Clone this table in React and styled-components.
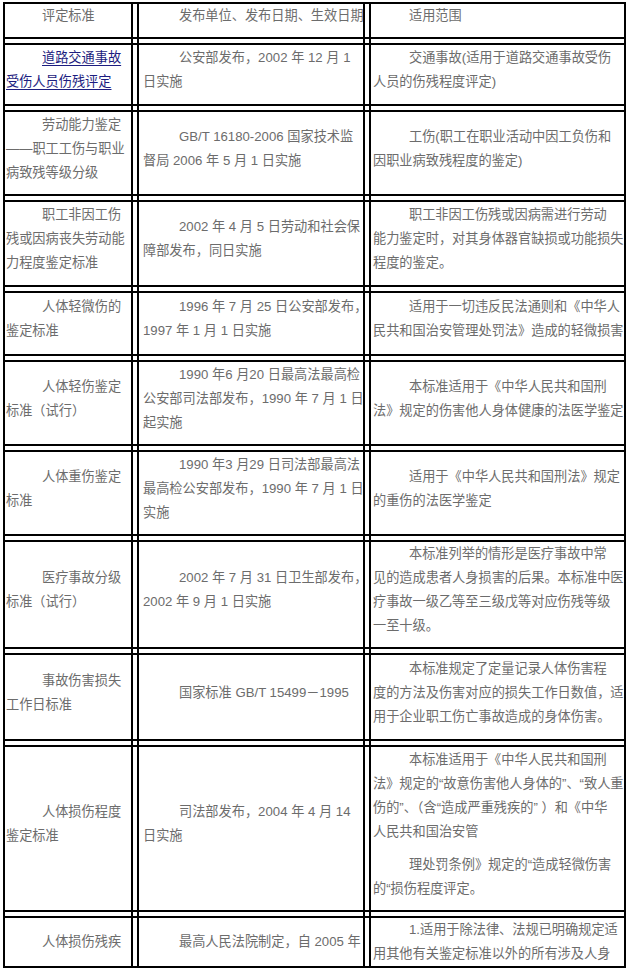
import React from 'react'
import styled, { createGlobalStyle } from 'styled-components'

const GlobalStyle = createGlobalStyle`
  html, body {
    margin: 0;
    padding: 0;
    background: #fff;
  }
  body {
    font-family: "Liberation Sans", "Noto Sans CJK SC", sans-serif;
  }
`

const rows = [
  { h: 37, cells: [[['评定标准']], [['发布单位、发布日期、生效日期']], [['适用范围']]] },
  {
    h: 63,
    link: 0,
    cells: [
      [['道路交通事故', '受伤人员伤残评定 ']],
      [['公安部发布，2002 年 12 月 1', '日实施']],
      [['交通事故(适用于道路交通事故受伤', '人员的伤残程度评定)']],
    ],
  },
  {
    h: 86,
    cells: [
      [['劳动能力鉴定', '——职工工伤与职业', '病致残等级分级']],
      [['GB/T 16180-2006 国家技术监', '督局 2006 年 5 月 1 日实施']],
      [['工伤(职工在职业活动中因工负伤和', '因职业病致残程度的鉴定)']],
    ],
  },
  {
    h: 87,
    cells: [
      [['职工非因工伤', '残或因病丧失劳动能', '力程度鉴定标准']],
      [['2002 年 4 月 5 日劳动和社会保', '障部发布，同日实施']],
      [['职工非因工伤残或因病需进行劳动', '能力鉴定时，对其身体器官缺损或功能损失', '程度的鉴定。']],
    ],
  },
  {
    h: 65,
    cells: [
      [['人体轻微伤的', '鉴定标准']],
      [['1996 年 7 月 25 日公安部发布，', '1997 年 1 月 1 日实施']],
      [['适用于一切违反民法通则和《中华人', '民共和国治安管理处罚法》造成的轻微损害']],
    ],
  },
  {
    h: 86,
    cells: [
      [['人体轻伤鉴定', '标准（试行）']],
      [['1990 年6 月20 日最高法最高检', '公安部司法部发布，1990 年 7 月 1 日', '起实施']],
      [['本标准适用于《中华人民共和国刑', '法》规定的伤害他人身体健康的法医学鉴定']],
    ],
  },
  {
    h: 86,
    cells: [
      [['人体重伤鉴定', '标准']],
      [['1990 年3 月29 日司法部最高法', '最高检公安部发布，1990 年 7 月 1 日', '实施']],
      [['适用于《中华人民共和国刑法》规定', '的重伤的法医学鉴定']],
    ],
  },
  {
    h: 109,
    cells: [
      [['医疗事故分级', '标准（试行）']],
      [['2002 年 7 月 31 日卫生部发布，', '2002 年 9 月 1 日实施']],
      [[
        '本标准列举的情形是医疗事故中常',
        '见的造成患者人身损害的后果。本标准中医',
        '疗事故一级乙等至三级戊等对应伤残等级',
        '一至十级。',
      ]],
    ],
  },
  {
    h: 88,
    cells: [
      [['事故伤害损失', '工作日标准']],
      [['国家标准  GB/T 15499－1995']],
      [[
        '本标准规定了定量记录人体伤害程',
        '度的方法及伤害对应的损失工作日数值，适',
        '用于企业职工伤亡事故造成的身体伤害。',
      ]],
    ],
  },
  {
    h: 167,
    cells: [
      [['人体损伤程度', '鉴定标准']],
      [['司法部发布，2004 年 4 月 14', '日实施']],
      [
        [
          '本标准适用于《中华人民共和国刑',
          '法》规定的“故意伤害他人身体的”、“致人重',
          '伤的”、（含“造成严重残疾的” ）和《中华',
          '人民共和国治安管',
        ],
        ['理处罚条例》规定的“造成轻微伤害', '的“损伤程度评定。'],
      ],
    ],
  },
  {
    h: 52,
    tight: true,
    cells: [
      [['人体损伤残疾']],
      [['最高人民法院制定，自 2005 年']],
      [['1.适用于除法律、法规已明确规定适', '用其他有关鉴定标准以外的所有涉及人身']],
    ],
  },
]

// border-box widths of the three columns
const colWidths = [130, 228, 257]

const App = () => {
  return (
    <>
      <GlobalStyle />
      <Table>
        <colgroup>
          {colWidths.map((w, i) => (
            <Col key={i} $w={w} />
          ))}
        </colgroup>
        <tbody>
          {rows.map((row, r) => (
            <Row key={r} $h={row.h}>
              {row.cells.map((paras, c) => (
                <Cell key={c} $col={c} $lastRow={r === rows.length - 1}>
                  {paras.map((lines, p) => (
                    <Para key={p} $tight={row.tight}>
                      {row.link === c ? (
                        <Link href="#">{renderLines(lines)}</Link>
                      ) : (
                        renderLines(lines)
                      )}
                    </Para>
                  ))}
                </Cell>
              ))}
            </Row>
          ))}
        </tbody>
      </Table>
    </>
  )
}

const renderLines = (lines) =>
  lines.map((line, i) => (
    <React.Fragment key={i}>
      {i > 0 && <br />}
      {line}
    </React.Fragment>
  ))

export default App

const Table = styled.table`
  border-collapse: separate;
  border-spacing: 4px;
  table-layout: fixed;
  width: 630px;
  margin: -2px 0 0 -1px;
`

const Col = styled.col`
  width: ${(p) => p.$w}px;
`

const Row = styled.tr`
  height: ${(p) => p.$h}px;
`

// each cell carries its own box; the pseudo elements run the rules
// on through the spacing so the grid reads as double lines (#)
const Cell = styled.td`
  position: relative;
  box-sizing: border-box;
  border: 2px solid #000;
  padding: 0 1px 0 ${(p) => (p.$col === 1 ? 4 : p.$col === 2 ? 2 : 1)}px;
  vertical-align: middle;

  &::before {
    content: '';
    position: absolute;
    top: -2px;
    bottom: -2px;
    right: -6px;
    width: 4px;
    box-sizing: border-box;
    border-top: 2px solid #000;
    border-bottom: 2px solid #000;
  }
  &:last-child::before {
    display: none;
  }

  &::after {
    content: '';
    display: ${(p) => (p.$lastRow ? 'none' : 'block')};
    position: absolute;
    left: -2px;
    right: -2px;
    bottom: -6px;
    height: 4px;
    box-sizing: border-box;
    border-left: 2px solid #000;
    border-right: 2px solid #000;
  }
`

const Para = styled.p`
  margin: 0 0 ${(p) => (p.$tight ? 0 : 9)}px;
  font-size: 13.2px;
  line-height: 24px;
  color: #6c6c6c;
  text-indent: 36px;
  white-space: nowrap;
`

const Link = styled.a`
  color: #1d1d80;
  text-decoration: underline;
  text-underline-offset: 3px;
`
